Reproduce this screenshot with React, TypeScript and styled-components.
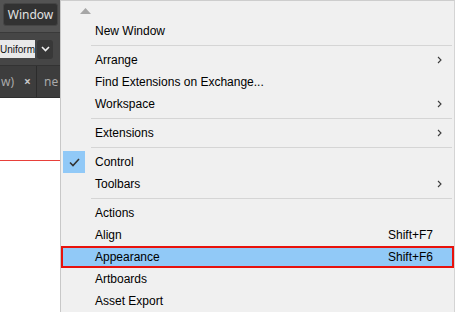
import { FC } from 'react';
import styled, { createGlobalStyle } from 'styled-components';

type Entry =
  | { kind: 'separator' }
  | {
      kind: 'item';
      label: string;
      shortcut?: string;
      submenu?: boolean;
      checked?: boolean;
      active?: boolean;
    };

const entries: Entry[] = [
  { kind: 'item', label: 'New Window' },
  { kind: 'separator' },
  { kind: 'item', label: 'Arrange', submenu: true },
  { kind: 'item', label: 'Find Extensions on Exchange...' },
  { kind: 'item', label: 'Workspace', submenu: true },
  { kind: 'separator' },
  { kind: 'item', label: 'Extensions', submenu: true },
  { kind: 'separator' },
  { kind: 'item', label: 'Control', checked: true },
  { kind: 'item', label: 'Toolbars', submenu: true },
  { kind: 'separator' },
  { kind: 'item', label: 'Actions' },
  { kind: 'item', label: 'Align', shortcut: 'Shift+F7' },
  { kind: 'item', label: 'Appearance', shortcut: 'Shift+F6', active: true },
  { kind: 'item', label: 'Artboards' },
  { kind: 'item', label: 'Asset Export' },
];

const GlobalStyle = createGlobalStyle`
  html, body {
    margin: 0;
    padding: 0;
    width: 455px;
    height: 312px;
    overflow: hidden;
    background: #ffffff;
  }
  body {
    font-family: 'Liberation Sans', Arial, sans-serif;
  }
`;

const Screen = styled.div`
  display: flex;
  flex-direction: row;
  width: 455px;
  height: 312px;
  overflow: hidden;
`;

const LeftPane = styled.div`
  width: 60px;
  display: flex;
  flex-direction: column;
  overflow: hidden;
`;

const AppBar = styled.div`
  height: 33px;
  background: #535353;
  border-bottom: 1px solid #3a3a3a;
  display: flex;
  align-items: flex-start;
  padding: 3px 0 0 3px;
  box-sizing: border-box;
`;

const MenuButton = styled.div`
  width: 55px;
  height: 23px;
  box-sizing: border-box;
  background: #323232;
  border: 1px solid #454545;
  border-radius: 3px;
  color: #e2e2e2;
  font-family: 'Noto Sans', 'Open Sans', sans-serif;
  font-size: 12px;
  display: flex;
  align-items: center;
  justify-content: center;
`;

const ControlBar = styled.div`
  height: 32px;
  background: #464646;
  border-bottom: 1px solid #333333;
  display: flex;
  align-items: center;
  gap: 2px;
`;

const Field = styled.div`
  width: 35px;
  height: 18px;
  background: #e9e9e9;
  color: #111111;
  font-family: 'Liberation Sans', Arial, sans-serif;
  font-size: 10px;
  display: flex;
  align-items: center;
  justify-content: center;
  overflow: hidden;
  white-space: nowrap;
`;

const DropButton = styled.div`
  width: 16px;
  height: 19px;
  background: #383838;
  border-radius: 3px;
  display: flex;
  align-items: center;
  justify-content: center;
`;

const TabBar = styled.div`
  height: 31px;
  background: #3d3d3d;
  border-bottom: 1px solid #2f2f2f;
  display: flex;
  align-items: center;
  color: #a9a9a9;
  font-family: 'Noto Sans', 'Open Sans', sans-serif;
  font-size: 12px;
  white-space: nowrap;
`;

const TabText = styled.span`
  width: 21px;
  padding-left: 1px;
  box-sizing: border-box;
`;

const TabClose = styled.span`
  width: 13px;
  color: #c8c8c8;
  font-weight: bold;
  text-align: center;
`;

const TabDivider = styled.span`
  width: 1px;
  height: 31px;
  background: #2c2c2c;
  margin: 0 7px 0 2px;
`;

const Canvas = styled.div`
  flex: 1;
  background: #ffffff;
  padding-top: 62px;
`;

const Guide = styled.div`
  height: 1px;
  background: #e8403a;
`;

const Menu = styled.div`
  flex: 1;
  background: #f0f0f0;
  border-left: 1px solid #c8c8c8;
  border-right: 1px solid #d4d4d4;
  border-top: 1px solid #cdcdcd;
  display: flex;
  flex-direction: column;
  color: #000000;
  font-family: 'Liberation Sans', Arial, sans-serif;
  font-size: 12px;
`;

const ScrollUp = styled.div`
  height: 19px;
  padding-left: 19px;
  display: flex;
  align-items: center;
`;

const Row = styled.div<{ $active?: boolean }>`
  height: 22px;
  flex-shrink: 0;
  display: flex;
  align-items: center;
  background: ${({ $active }) => ($active ? '#91c9f7' : 'transparent')};
  box-shadow: ${({ $active }) => ($active ? 'inset 0 0 0 2px #e8120c' : 'none')};
`;

const CheckCell = styled.div<{ $checked?: boolean }>`
  width: 22px;
  height: 22px;
  margin: 0 8px 0 2px;
  background: ${({ $checked }) => ($checked ? '#91c9f7' : 'transparent')};
  display: flex;
  align-items: center;
  justify-content: center;
`;

const Label = styled.span`
  flex: 1;
  padding-left: 2px;
  white-space: nowrap;
`;

const Shortcut = styled.span`
  width: 60px;
  padding-right: 21px;
  text-align: right;
`;

const Arrow = styled.span`
  width: 5px;
  display: flex;
  padding-right: 12px;
`;

const Separator = styled.div`
  flex-shrink: 0;
  height: 1px;
  margin: 3px 2px 3px 30px;
  background: #d5d5d5;
`;

const Chevron: FC = () => (
  <svg width="5" height="8" viewBox="0 0 5 8">
    <path d="M1 1 L4 4 L1 7" fill="none" stroke="#3c3c3c" strokeWidth="1.1" />
  </svg>
);

const Check: FC = () => (
  <svg width="11" height="9" viewBox="0 0 11 9">
    <path d="M1 4.5 L4 7.5 L10 1" fill="none" stroke="#333333" strokeWidth="1.6" />
  </svg>
);

const MenuRow: FC<Extract<Entry, { kind: 'item' }>> = ({
  label,
  shortcut,
  submenu,
  checked,
  active,
}) => (
  <Row $active={active}>
    <CheckCell $checked={checked}>{checked && <Check />}</CheckCell>
    <Label>{label}</Label>
    {shortcut && <Shortcut>{shortcut}</Shortcut>}
    {submenu && (
      <Arrow>
        <Chevron />
      </Arrow>
    )}
  </Row>
);

export default function App() {
  return (
    <>
      <GlobalStyle />
      <Screen>
        <LeftPane>
          <AppBar>
            <MenuButton>Window</MenuButton>
          </AppBar>
          <ControlBar>
            <Field>Uniform</Field>
            <DropButton>
              <svg width="9" height="6" viewBox="0 0 9 6">
                <path d="M1 1 L4.5 4.5 L8 1" fill="none" stroke="#f0f0f0" strokeWidth="1.6" />
              </svg>
            </DropButton>
          </ControlBar>
          <TabBar>
            <TabText>w)</TabText>
            <TabClose>×</TabClose>
            <TabDivider />
            <span>ne</span>
          </TabBar>
          <Canvas>
            <Guide />
          </Canvas>
        </LeftPane>

        <Menu>
          <ScrollUp>
            <svg width="11" height="6" viewBox="0 0 11 6">
              <path d="M0 6 L5.5 0 L11 6 Z" fill="#a6a6a6" />
            </svg>
          </ScrollUp>
          {entries.map((entry, index) =>
            entry.kind === 'separator' ? (
              <Separator key={index} />
            ) : (
              <MenuRow key={index} {...entry} />
            )
          )}
        </Menu>
      </Screen>
    </>
  );
}
